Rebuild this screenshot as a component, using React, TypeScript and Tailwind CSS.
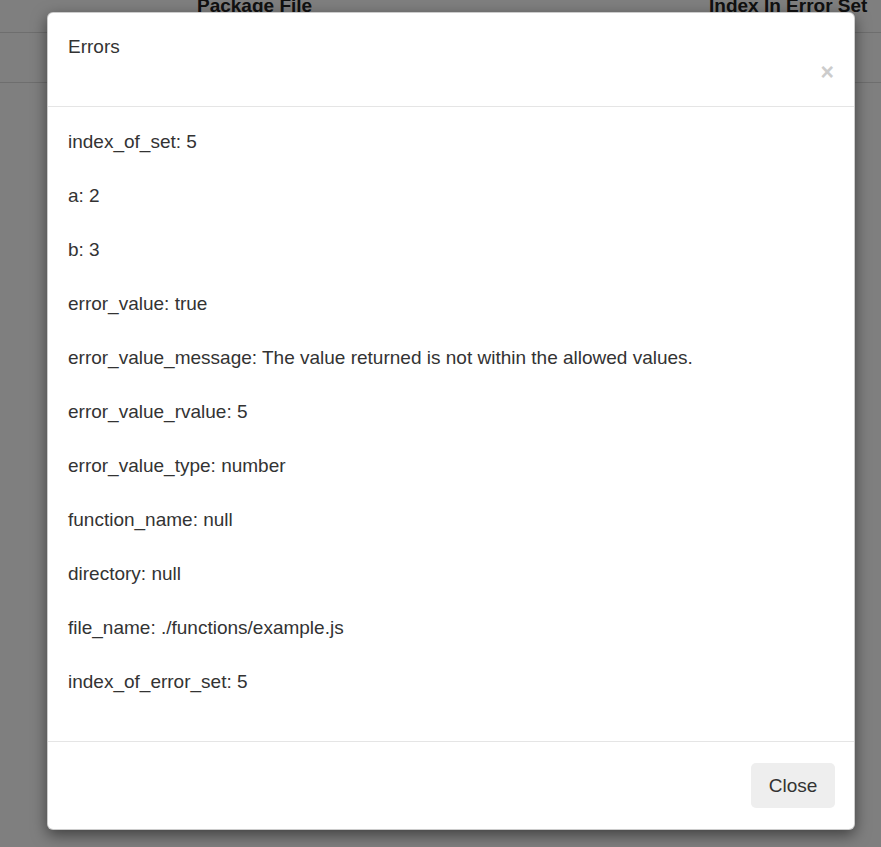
import React from "react";

const rows = [
  "index_of_set: 5",
  "a: 2",
  "b: 3",
  "error_value: true",
  "error_value_message: The value returned is not within the allowed values.",
  "error_value_rvalue: 5",
  "error_value_type: number",
  "function_name: null",
  "directory: null",
  "file_name: ./functions/example.js",
  "index_of_error_set: 5",
];

export default function App() {
  return (
    <div
      className="relative w-[881px] h-[847px] overflow-hidden bg-white text-[#333]"
      style={{ fontFamily: '"Liberation Sans", Arial, sans-serif' }}
    >
      {/* background table */}
      <div className="-mt-[5px]">
        <div className="flex h-[38px] items-start border-b border-[#ddd] text-[19px] font-bold text-[#222] leading-[22px]">
          <div className="ml-[197px] w-[512px]">Package File</div>
          <div>Index In Error Set</div>
        </div>
        <div className="h-[50px] border-b border-[#ddd]" />
      </div>

      {/* overlay */}
      <div className="absolute inset-0 bg-black/50" />

      {/* modal */}
      <div className="absolute left-[47px] top-[12px] w-[808px] h-[818px] flex flex-col rounded-[6px] bg-white border border-black/20 shadow-[0_5px_15px_rgba(0,0,0,0.5)]">
        <div className="h-[94px] shrink-0 flex justify-between border-b border-[#e5e5e5] px-[20px]">
          <div className="pt-[20px] text-[19px] leading-[27px]">Errors</div>
          <div className="pt-[47px] text-[23px] font-bold leading-[24px] text-[#ccc]">×</div>
        </div>
        <div className="flex-1 px-[20px] pt-[21px]">
          {rows.map((r) => (
            <p key={r} className="text-[19px] leading-[27px] mb-[27px]">
              {r}
            </p>
          ))}
        </div>
        <div className="h-[88px] shrink-0 flex items-start justify-end border-t border-[#e5e5e5] px-[19px] pt-[21px]">
          <button className="w-[84px] h-[45px] rounded-[5px] bg-[#eee] text-[19px] leading-[45px] text-[#333]">
            Close
          </button>
        </div>
      </div>
    </div>
  );
}
